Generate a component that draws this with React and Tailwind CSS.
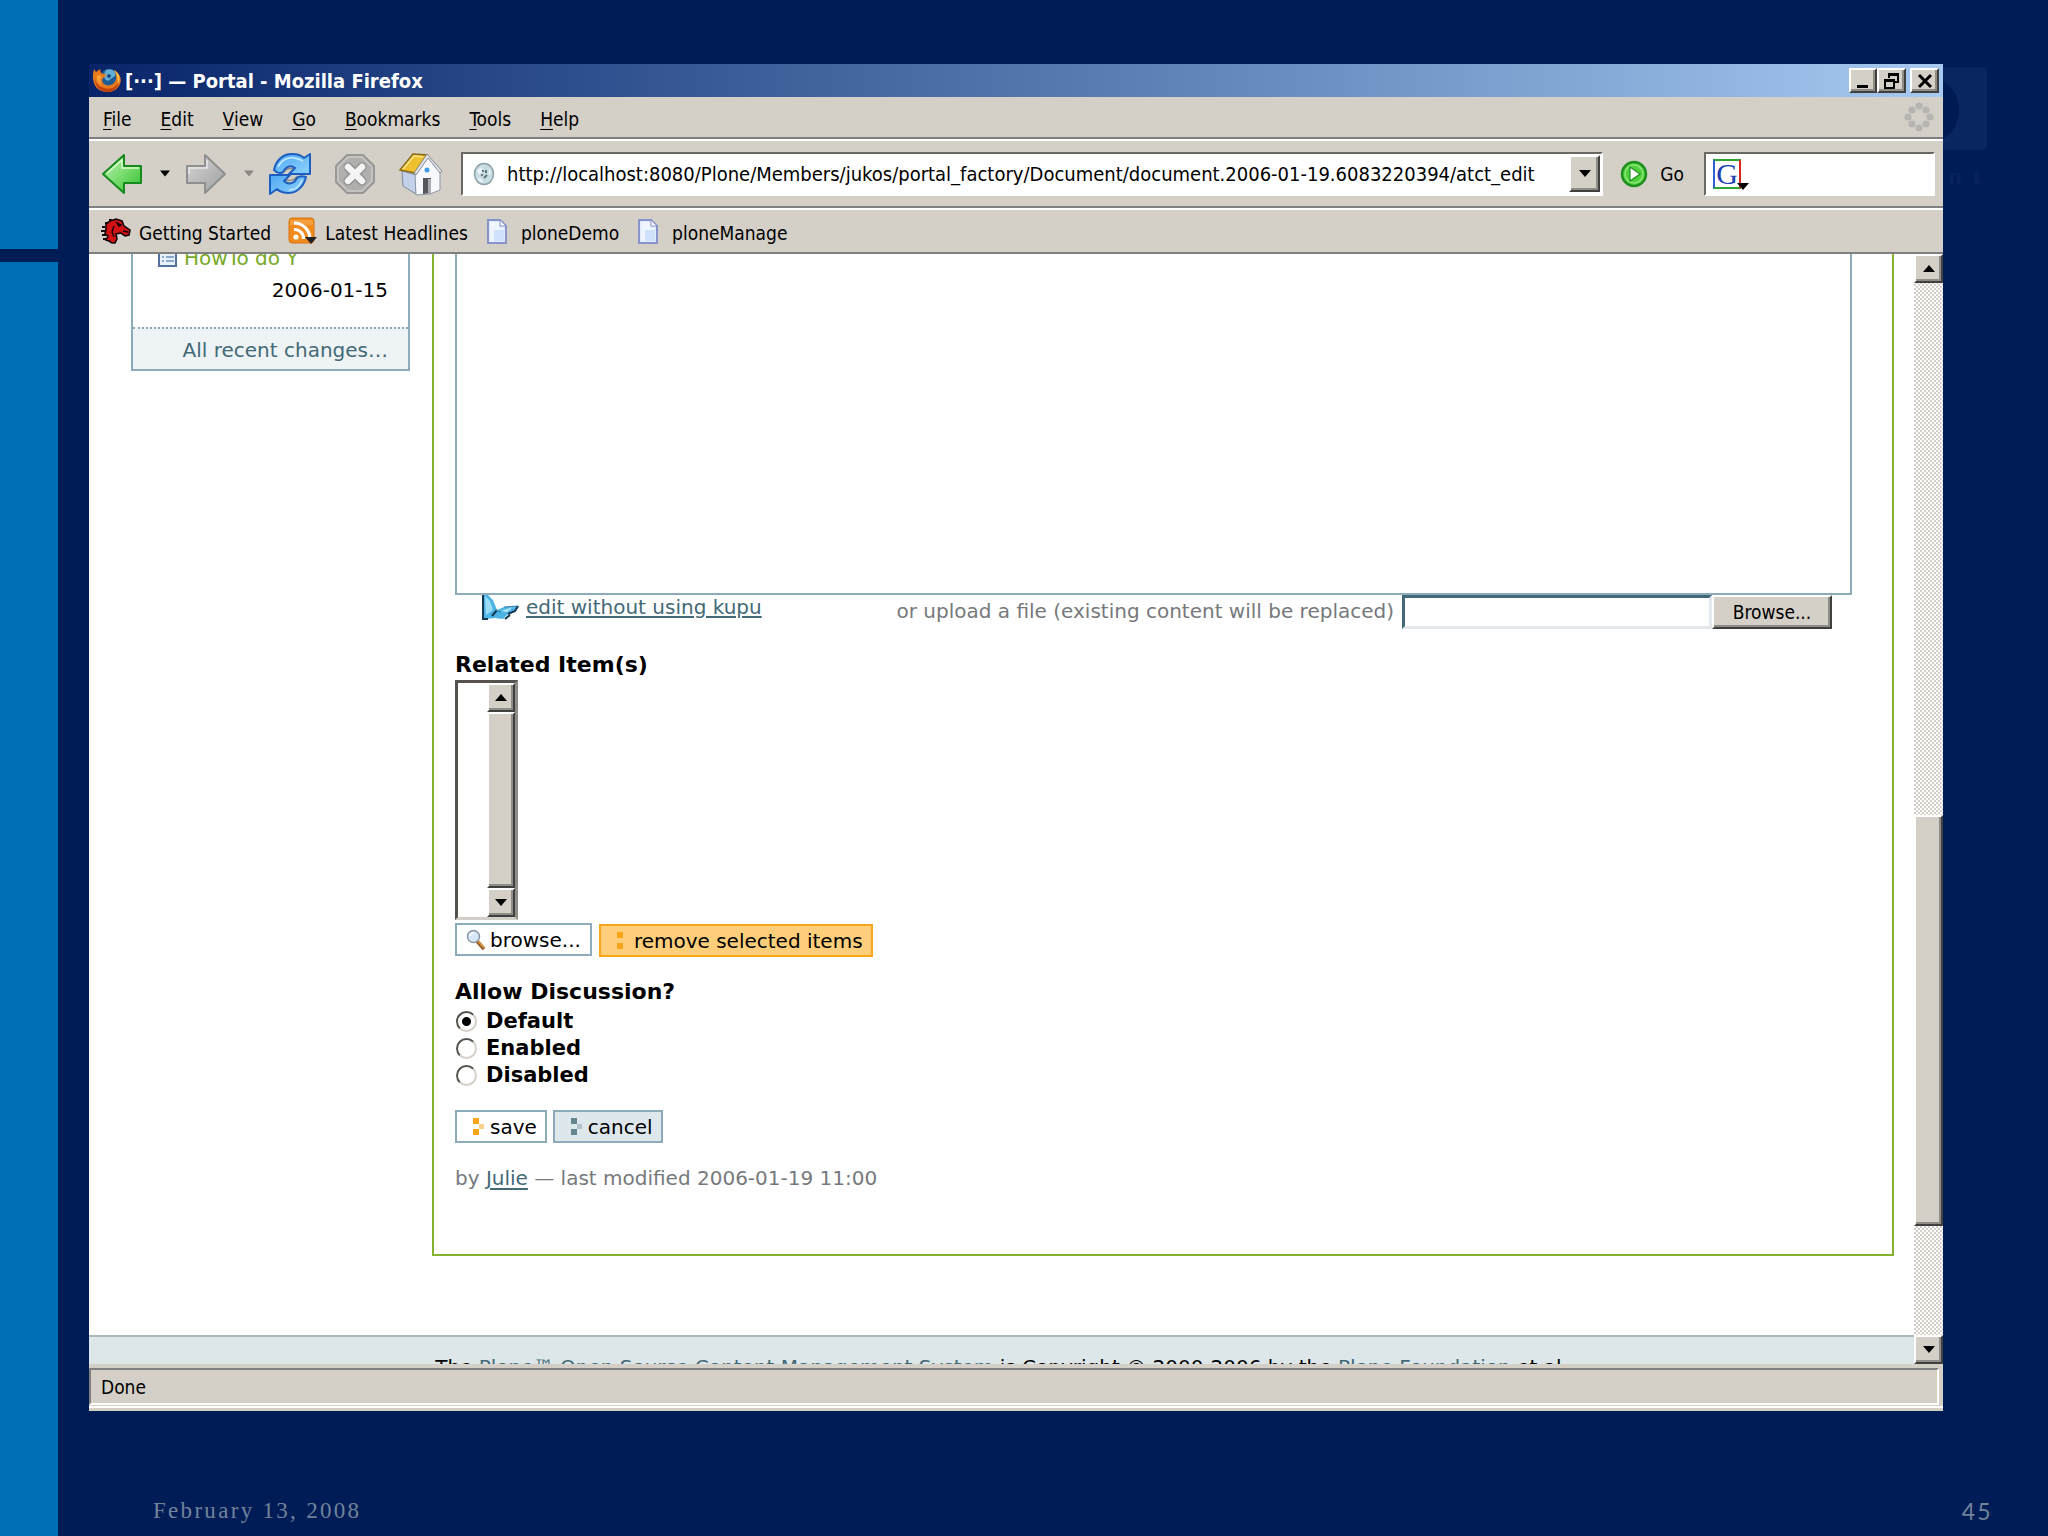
import React, { useState } from "react";
import clsx from "clsx";

const bevel =
  "bg-[#d4d0c8] border-2 border-t-white border-l-white border-r-[#404040] border-b-[#404040] shadow-[inset_-2px_-2px_0_#8f8c86]";
const sunken =
  "bg-white border-2 border-t-[#6b6862] border-l-[#6b6862] border-r-white border-b-white";

const menus = ["File", "Edit", "View", "Go", "Bookmarks", "Tools", "Help"];

function Triangle({ up, className = "w-3" }) {
  return (
    <svg viewBox="0 0 12 7" className={clsx("h-[7px] shrink-0", className)} fill="currentColor">
      <path d={up ? "M0 7h12L6 0z" : "M0 0h12L6 7z"} />
    </svg>
  );
}

function FirefoxIcon() {
  return (
    <svg viewBox="0 0 28 26" className="w-7 h-[26px] shrink-0">
      <circle cx="16" cy="11" r="10" fill="#1f5c96" />
      <path d="M13 2c4-2 8 0 9 3s-1 4-3 5-3 4-6 2-2-8 0-10z" fill="#63aed6" />
      <path d="M15 6l3 1-1 3-3-1z" fill="#163d72" />
      <path d="M1 1l2 3 4-3 1 4 6 2-4 3c-2 3 0 6 3 7s6 0 8-2c3-3 3-8 0-13 6 3 8 9 6 14s-7 8-12 8S3 22 1 15 0 6 1 1z" fill="#e87a1c" />
      <path d="M2 9c0 6 3 9 9 11s12 0 15-7c-1 8-7 12-13 11S1 18 2 9z" fill="#c0430f" />
      <path d="M21 2c5 3 7 9 4 14 0-6-1-10-4-14z" fill="#f9c945" />
      <path d="M4 7c-1 4 1 8 4 10-1-4-1-7 1-9z" fill="#f7a13a" />
    </svg>
  );
}

function Throbber() {
  const dots = [[15, 4], [22, 8], [26, 15], [22, 22], [15, 26], [8, 22], [4, 15], [8, 8]];
  return (
    <svg viewBox="0 0 30 30" className="size-[30px]" fill="#b7b5b2">
      {dots.map(([x, y]) => (
        <circle key={`${x}-${y}`} cx={x} cy={y} r="3.6" />
      ))}
    </svg>
  );
}

function ArrowIcon({ forward }) {
  return (
    <svg viewBox="0 0 42 42" className="size-[42px]">
      <defs>
        <linearGradient id={forward ? "fwd" : "back"} x1="0" y1="0" x2="1" y2="1">
          <stop offset="0" stopColor={forward ? "#d6d6d6" : "#c5f7b4"} />
          <stop offset="1" stopColor={forward ? "#9f9f9f" : "#2fc12c"} />
        </linearGradient>
      </defs>
      <path
        d={forward ? "M40 21L20 2v11H2v17h18v10z" : "M2 21L23 2v11h17v17H23v10z"}
        fill={forward ? "url(#fwd)" : "url(#back)"}
        stroke={forward ? "#8f8f8f" : "#168a1c"}
        strokeWidth="2"
        strokeLinejoin="round"
      />
      <path
        d={forward ? "M22 7v8H4v6" : "M6 20L21 7v8h17"}
        fill="none"
        stroke={forward ? "#e9e9e9" : "#d8fbcc"}
        strokeWidth="1.5"
      />
    </svg>
  );
}

function ReloadIcon() {
  return (
    <svg viewBox="0 0 42 42" className="size-[42px]">
      <defs>
        <linearGradient id="reload" x1="0" y1="0" x2="1" y2="1">
          <stop offset="0" stopColor="#4fa9f5" />
          <stop offset="1" stopColor="#8fd2fb" />
        </linearGradient>
      </defs>
      <path d="M14 20c2-4 8-6 12-4l-5 5M28 23c-2 4-7 5-12 4l4-5" fill="none" stroke="#8c8a86" strokeWidth="1.5" />
      <g fill="url(#reload)" stroke="#1d5fc0" strokeWidth="2" strokeLinejoin="round">
        <path d="M5 17C7 7 14 1 23 1c5 0 9 1 12 4l6-4v20H20l6-6c-4-3-9-2-12 4-2 2-6 1-9-2z" />
        <path d="M1 41V22h20l-6 6c4 4 10 3 13-3 2-2 6-2 9-1-2 9-9 16-17 16-5 0-9-1-12-4z" />
      </g>
      <path d="M9 14C12 7 19 4 25 5s8 3 9 3M33 27c-2 6-7 10-13 10" fill="none" stroke="#c5ecff" strokeWidth="1.5" />
    </svg>
  );
}

function StopIcon() {
  return (
    <svg viewBox="0 0 42 42" className="size-[42px]">
      <path d="M13 2h16l11 11v16L29 40H13L2 29V13z" fill="#b0afad" stroke="#9a9896" strokeWidth="2" />
      <path d="M14 4h14l10 10v14L28 38H14L4 28V14z" fill="none" stroke="#cbc9c6" strokeWidth="1.5" />
      <path d="M14 14l14 14M28 14L14 28" stroke="#8f8f8f" strokeWidth="9" strokeLinecap="round" />
      <path d="M14 14l14 14M28 14L14 28" stroke="#f4f4f4" strokeWidth="6.5" strokeLinecap="round" />
    </svg>
  );
}

function HomeIcon() {
  return (
    <svg viewBox="0 0 44 44" className="size-11">
      <path d="M3 19l14 4v19L4 34z" fill="#c3d2ea" stroke="#7d889c" />
      <path d="M16 23L29 5l12 15v18l-10 4-14 1z" fill="#f6f8fc" stroke="#8b95a6" />
      <path d="M24 26h8v15l-8 1z" fill="#55575e" />
      <path d="M29 27h3v14l-3 1z" fill="#a9abb0" />
      <circle cx="28" cy="18" r="2.500" fill="#3c9be8" />
      <path d="M1 18L14 2l14 1-12 18z" fill="#eec02e" stroke="#8b6a12" strokeWidth="1.5" />
      <path d="M4 17L15 4l9 1" fill="none" stroke="#fbe78a" strokeWidth="1.5" />
      <path d="M28 2l15 17-2 2L29 6 17 23l-2-2z" fill="#dfe2e8" stroke="#73777e" strokeWidth=".8" />
    </svg>
  );
}

function SiteIcon() {
  return (
    <svg viewBox="0 0 22 24" className="w-[22px] h-6 shrink-0">
      <ellipse cx="11" cy="12" rx="9.500" ry="10.500" fill="#c9dcdf" stroke="#8ba1a8" strokeWidth="1.5" />
      <path d="M4 8l5-3 1 4-4 4zM5 16l4 1 1 4-4-2zM16 6l2 5-2 3z" fill="#ebf4f6" />
      <path d="M9 9h2M13 8v3M14 13l-3 3" stroke="#5f747d" strokeWidth="2" />
      <circle cx="9" cy="13" r="1.200" fill="#6b7f88" />
    </svg>
  );
}

function GoIcon() {
  return (
    <svg viewBox="0 0 28 28" className="size-7">
      <circle cx="14" cy="14" r="12" fill="#4fcf3c" stroke="#1f8f1d" strokeWidth="2.5" />
      <circle cx="14" cy="14" r="9" fill="none" stroke="#8be67a" strokeWidth="1.5" />
      <path d="M10 7l10 7-10 7z" fill="#fff" stroke="#1f8f1d" strokeWidth="1.2" />
    </svg>
  );
}

function DragonIcon() {
  return (
    <svg viewBox="0 0 30 26" className="w-[30px] h-[26px] shrink-0">
      <path d="M1 9h3M0 13h4M1 17h4M2 21h5M4 5h3M8 2h3" stroke="#111" strokeWidth="2" />
      <path d="M9 3l6-2 6 2 2 5 6 4-1 5-4 1-4-3-5 1 1 5-2 4h-3l-3-2-3-1 2-4-3-2 1-5V6z" fill="#d31216" stroke="#160404" strokeWidth="1.6" />
      <path d="M16 5l4 2-2 1zM22 13l5 1M13 8l-2 6 2 5" stroke="#160404" strokeWidth="1.4" fill="none" />
    </svg>
  );
}

function FeedIcon() {
  return (
    <svg viewBox="0 0 30 28" className="w-[30px] h-7 shrink-0">
      <rect x="1" y="1" width="25" height="25" rx="3" fill="#f08a1d" stroke="#d9730f" />
      <path d="M2 3h23v5H2z" fill="#f8ae55" opacity=".6" />
      <circle cx="8" cy="20" r="2.6" fill="#fff" />
      <path d="M6 12.500a9 9 0 0 1 9.500 9.500M6 6a16 16 0 0 1 16 16" fill="none" stroke="#fff" strokeWidth="3.200" />
      <path d="M17 20h12l-6 7z" fill="#222" />
    </svg>
  );
}

function PageIcon() {
  return (
    <svg viewBox="0 0 22 27" className="w-[22px] h-[27px] shrink-0">
      <path d="M2 2h12l6 6v17H2z" fill="#dfeafc" stroke="#8793c9" strokeWidth="2" />
      <path d="M4 4h9v6h5v13H4z" fill="#eff5ff" />
      <path d="M8 12h10v11H8z" fill="#cfe1fb" />
      <path d="M14 2v6h6z" fill="#fff" stroke="#8793c9" />
    </svg>
  );
}

function DocIcon() {
  return (
    <svg viewBox="0 0 20 20" className="size-5 shrink-0">
      <rect x="1" y="1" width="17" height="17" fill="#e8f0f8" stroke="#54709c" strokeWidth="2" />
      <path d="M4 5h2M4 9h2M4 13h2M8 5h8M8 9h8M8 13h8" stroke="#6f8fc0" strokeWidth="1.600" />
    </svg>
  );
}

function ButterflyIcon() {
  return (
    <svg viewBox="0 0 38 25" className="w-[38px] h-[25px] shrink-0">
      <path d="M1 0h5l5 5 4 10 7-3 15-1-3 5-8 3-5 5-8-1-10 1H1z" fill="#4db5e6" />
      <path d="M3 1l5 5 3 9-7 5z" fill="#9bdcf7" />
      <path d="M1 0v24h5M15 15l-5 6M23 24l5-4M36 11l-3 5-7 3" fill="none" stroke="#14384f" strokeWidth="2" />
      <path d="M13 15l6 2M22 12l14-1" fill="none" stroke="#3a7fa3" />
      <path d="M19 16l12-4-6 5z" fill="#b5e4f7" />
    </svg>
  );
}

function MagnifierIcon() {
  return (
    <svg viewBox="0 0 20 22" className="w-5 h-[22px] shrink-0">
      <path d="M11 12l7 8" stroke="#8a5a2a" strokeWidth="3.500" />
      <path d="M12 12l6 7" stroke="#e59a3c" strokeWidth="1.500" />
      <circle cx="7.500" cy="7.500" r="6" fill="#d6e8f7" stroke="#8a97a8" strokeWidth="1.500" />
      <path d="M4 7a4 4 0 0 1 4-3" fill="none" stroke="#fff" strokeWidth="1.500" />
    </svg>
  );
}

function Squares({ color, accent }) {
  return (
    <svg viewBox="0 0 12 17" className="w-3 h-[17px] shrink-0">
      <path d="M0 0h6v6H0zM0 11h6v6H0z" fill={color} />
      {accent && <path d="M6 6h5v5H6z" fill={accent} />}
    </svg>
  );
}

function SearchEngineIcon() {
  return (
    <span className="relative block w-7 h-[30px] shrink-0 border-2 border-t-[#2ea52e] border-b-[#2ea52e] border-l-[#2f5fd0] border-r-[#d8261c] bg-white">
      <span className="absolute -top-px left-0 w-6 text-center text-[30px] leading-7 text-[#1b3fb4] font-['Liberation_Serif',serif]">G</span>
      <Triangle className="w-3 absolute -right-[10px] -bottom-[3px] text-black" />
    </span>
  );
}

function Scrollbar({ className, children }) {
  return (
    <div className={clsx("flex flex-col shrink-0", className)}>
      <button aria-label="Scroll up" className={clsx("h-[29px] shrink-0 flex items-center justify-center", bevel)}>
        <Triangle up />
      </button>
      <div className="flex-1 flex flex-col min-h-0">{children}</div>
      <button aria-label="Scroll down" className={clsx("h-[29px] shrink-0 flex items-center justify-center", bevel)}>
        <Triangle />
      </button>
    </div>
  );
}

function TitleBar() {
  const control = clsx("h-[25px] flex items-center justify-center", bevel);
  return (
    <div className="h-[33px] flex items-center px-1 bg-linear-to-r from-[#0a246a] to-[#a6caf0]">
      <FirefoxIcon />
      <h1 className="ml-1 flex-1 text-[20px] leading-6 font-bold text-white">[···] — Portal - Mozilla Firefox</h1>
      <button aria-label="Minimize" className={clsx("w-7", control)}>
        <svg viewBox="0 0 20 18" className="w-5 h-[18px]"><path d="M4 13h11v3H4z" /></svg>
      </button>
      <button aria-label="Restore" className={clsx("w-[29px] mr-1", control)}>
        <svg viewBox="0 0 20 18" className="w-5 h-[18px]" fill="none" stroke="#000">
          <path d="M7 2.500h10M3 8.500h10" strokeWidth="3" />
          <path d="M7 6V2h9v8h-4M3 8v8h9V8z" strokeWidth="2" />
        </svg>
      </button>
      <button aria-label="Close" className={clsx("w-[29px]", control)}>
        <svg viewBox="0 0 20 18" className="w-5 h-[18px]"><path d="M4 3l12 12M16 3L4 15" stroke="#000" strokeWidth="3" /></svg>
      </button>
    </div>
  );
}

function NavBar() {
  return (
    <div className="h-[69px] flex items-center pl-3 pr-2 border-t-2 border-t-white border-b-2 border-b-[#808080]">
      <button aria-label="Back"><ArrowIcon /></button>
      <button aria-label="Back history" className="w-5 ml-3 flex justify-center"><Triangle className="w-[10px]" /></button>
      <button aria-label="Forward" className="ml-[10px]"><ArrowIcon forward /></button>
      <button aria-label="Forward history" className="w-5 ml-3 flex justify-center text-[#8a8883]"><Triangle className="w-[10px]" /></button>
      <button aria-label="Reload" className="ml-[10px]"><ReloadIcon /></button>
      <button aria-label="Stop" className="ml-[23px]"><StopIcon /></button>
      <button aria-label="Home" className="ml-[23px]"><HomeIcon /></button>
      <div className={clsx("ml-[18px] flex-1 h-11 flex items-center pl-[10px] text-[20px]", sunken)}>
        <SiteIcon />
        <input
          aria-label="Location"
          defaultValue="http://localhost:8080/Plone/Members/jukos/portal_factory/Document/document.2006-01-19.6083220394/atct_edit"
          className="flex-1 min-w-0 ml-3 h-8 outline-none bg-transparent"
        />
        <button aria-label="Show history" className={clsx("w-[31px] h-[37px] mr-px flex items-center justify-center", bevel)}>
          <Triangle />
        </button>
      </div>
      <button className="ml-[17px] mr-5 flex items-center gap-3">
        <GoIcon />
        <span>Go</span>
      </button>
      <div className={clsx("w-[231px] h-11 flex items-center pl-[7px]", sunken)}>
        <SearchEngineIcon />
        <input aria-label="Search" className="flex-1 min-w-0 ml-3 h-8 outline-none bg-transparent" />
      </div>
    </div>
  );
}

function BookmarksBar() {
  return (
    <nav className="h-[46px] flex items-center pl-3 border-t-2 border-t-white border-b-2 border-b-[#808080]">
      <a href="#getting-started" className="flex items-center gap-2"><DragonIcon /><span className="pt-1">Getting Started</span></a>
      <a href="#headlines" className="ml-[17px] flex items-center gap-[7px]"><FeedIcon /><span className="pt-1">Latest Headlines</span></a>
      <a href="#demo" className="ml-[18px] flex items-center gap-[13px]"><PageIcon /><span className="pt-1">ploneDemo</span></a>
      <a href="#manage" className="ml-[18px] flex items-center gap-[13px]"><PageIcon /><span className="pt-1">ploneManage</span></a>
    </nav>
  );
}

function RecentChanges() {
  return (
    <aside className="w-[279px] shrink-0 border-2 border-t-0 border-[#8cacbb] text-[20px] leading-8">
      <div className="-mt-3 pl-[25px] flex items-center gap-[6px]">
        <DocIcon />
        <a href="#howto" className="text-[#76a926]">HowTo do Y</a>
      </div>
      <div className="pr-5 pb-[21px] text-right">2006-01-15</div>
      <div className="pr-5 h-[42px] pt-[5px] text-right border-t-2 border-dotted border-[#8cacbb] bg-[#eef3f5]">
        <a href="#recent" className="text-[#436976]">All recent changes…</a>
      </div>
    </aside>
  );
}

function EditForm() {
  const [discussion, setDiscussion] = useState("Default");
  const action = "h-[33px] flex items-center border-2 text-[20px] leading-6";

  return (
    <form onSubmit={(e) => e.preventDefault()} className="flex-1 min-w-0 pl-[21px] pr-10 pb-[62px] border-2 border-t-0 border-[#84b12e]">
      <textarea aria-label="Body text" className="block w-full h-[341px] resize-none outline-none border-2 border-t-0 border-[#8cacbb]" />

      <div className="flex items-start pl-[27px] pr-5 text-[20px] leading-6">
        <ButterflyIcon />
        <a href="#plain" className="ml-[6px] text-[#436976] underline underline-offset-2">edit without using kupu</a>
        <label htmlFor="upload" className="ml-auto mr-2 mt-1 text-[#76797c]">
          or upload a file (existing content will be replaced)
        </label>
        <input id="upload" className="w-[310px] h-[34px] outline-none border-[3px] border-t-[#436976] border-l-[#436976] border-r-[#e4e8ea] border-b-[#e4e8ea]" />
        <button className={clsx("w-[120px] h-[34px] text-[19px] font-['DejaVu_Sans_Condensed','DejaVu_Sans',sans-serif]", bevel)}>Browse...</button>
      </div>

      <label htmlFor="related" className="mt-[22px] block w-fit text-[22px] leading-7 font-bold">Related Item(s)</label>
      <div className="mt-px w-[63px] h-60 flex border-[3px] border-t-[#55524e] border-l-[#55524e] border-r-[#8f8c86] border-b-[#d4d0c8] bg-white">
        <select id="related" multiple className="flex-1 min-w-0 appearance-none outline-none overflow-hidden" />
        <Scrollbar className="w-7">
          <div className={clsx("flex-1", bevel)} />
        </Scrollbar>
      </div>

      <div className="mt-[3px] flex gap-[7px]">
        <button className={clsx(action, "px-[9px] gap-1 border-[#8cacbb] bg-white")}>
          <MagnifierIcon />browse...
        </button>
        <button className={clsx(action, "pl-4 pr-2 gap-[5px] mt-px border-[#f9a51a] bg-[#ffce7b]")}>
          <Squares color="#f9a51a" />remove selected items
        </button>
      </div>

      <fieldset className="mt-[21px] font-bold text-[21px]">
        <legend className="leading-7 mb-[2px] text-[22px]">Allow Discussion?</legend>
        {["Default", "Enabled", "Disabled"].map((option) => (
          <label key={option} className="flex items-center gap-[9px] leading-[27px] w-fit">
            <input
              type="radio"
              name="discussion"
              checked={discussion === option}
              onChange={() => setDiscussion(option)}
              className="appearance-none ml-px size-[21px] rounded-full border-2 border-t-[#55524e] border-l-[#55524e] border-r-[#d4d0c8] border-b-[#d4d0c8] checked:bg-[radial-gradient(circle,#000_0_4px,transparent_5px)]"
            />
            {option}
          </label>
        ))}
      </fieldset>

      <div className="mt-[21px] flex gap-[6px]">
        <button className={clsx(action, "pl-4 pr-2 gap-[5px] border-[#8cacbb] bg-white")}>
          <Squares color="#f9a51a" accent="#fbd08a" />save
        </button>
        <button className={clsx(action, "pl-4 pr-2 gap-[5px] border-[#8cacbb] bg-[#dee7ec]")}>
          <Squares color="#64868f" accent="#b4c4ca" />cancel
        </button>
      </div>

      <p className="mt-[21px] text-[20px] leading-7 text-[#76797c]">
        by <a href="#julie" className="text-[#436976] underline underline-offset-3">Julie</a> — last modified 2006-01-19 11:00
      </p>
    </form>
  );
}

function PageFooter() {
  const link = "text-[#436976]";
  return (
    <footer className="mt-[79px] h-20 pt-[18px] border-t-2 border-[#a9b8bd] bg-[#dde7ea] text-[20px] leading-6 text-center whitespace-nowrap">
      The <a href="#plone" className={link}>Plone™ Open Source Content Management System</a> is Copyright © 2000-2006 by the{" "}
      <a href="#foundation" className={link}>Plone Foundation</a> et al.
    </footer>
  );
}

function BrowserWindow() {
  return (
    <section className="relative flex-1 min-h-0 flex flex-col bg-[#d4d0c8] text-black text-[19px] leading-6 font-['DejaVu_Sans_Condensed','DejaVu_Sans',sans-serif]">
      <TitleBar />
      <div className="h-[42px] flex items-center pl-[14px] pr-[9px] gap-[29px] border-b-2 border-b-[#808080]">
        {menus.map((name) => (
          <button key={name} className="pt-[3px]">
            <span className="underline underline-offset-3">{name[0]}</span>{name.slice(1)}
          </button>
        ))}
        <div className="ml-auto"><Throbber /></div>
      </div>
      <NavBar />
      <BookmarksBar />

      <div className="flex-1 min-h-0 flex bg-white">
        <div className="flex-1 min-w-0 overflow-hidden font-['DejaVu_Sans',sans-serif]">
          <div className="flex items-start gap-[22px] pl-[42px] pr-5">
            <RecentChanges />
            <EditForm />
          </div>
          <PageFooter />
        </div>
        <Scrollbar className="w-[29px] bg-[repeating-conic-gradient(#d4d0c8_0_25%,#fff_0_50%)] bg-[length:4px_4px]">
          <div className="basis-[532px] shrink" />
          <div className={clsx("basis-[411px]", bevel)} />
        </Scrollbar>
      </div>

      <div className="pt-1 pb-[3px]">
        <div className="h-[37px] mr-1 px-[10px] flex items-center border-2 border-t-[#808080] border-l-[#808080] border-r-white border-b-white">Done</div>
        <div className="mt-px h-[2px] bg-white" />
      </div>
    </section>
  );
}

export default function App() {
  return (
    <div className="h-screen flex bg-[#001c57]">
      <div className="w-[58px] shrink-0 flex flex-col gap-[13px]">
        <div className="basis-[249px] shrink-0 bg-[#0070b4]" />
        <div className="flex-1 bg-[#0070b4]" />
      </div>
      <div className="flex-1 min-w-0 flex flex-col pt-16 pl-[31px] pr-[105px] relative">
        <div className="absolute right-[61px] top-[67px] w-24 text-right" aria-hidden="true">
          <svg viewBox="0 0 96 83" className="w-24 h-[83px]">
            <rect width="96" height="83" rx="5" fill="#0a2662" />
            <ellipse cx="42" cy="43" rx="26" ry="31" fill="#001a54" />
          </svg>
          <p className="mt-3 pr-1 text-2xl leading-7 font-bold tracking-widest text-[#09235f] font-['Liberation_Serif',serif]">n t</p>
        </div>
        <BrowserWindow />
        <footer className="h-[125px] -mr-[50px] pl-16 pt-[86px] flex justify-between text-[23px] leading-7 text-[#70839a]">
          <span className="tracking-widest font-['Liberation_Serif',serif]">February 13, 2008</span>
          <span className="tracking-widest font-['Lato',sans-serif]">45</span>
        </footer>
      </div>
    </div>
  );
}
